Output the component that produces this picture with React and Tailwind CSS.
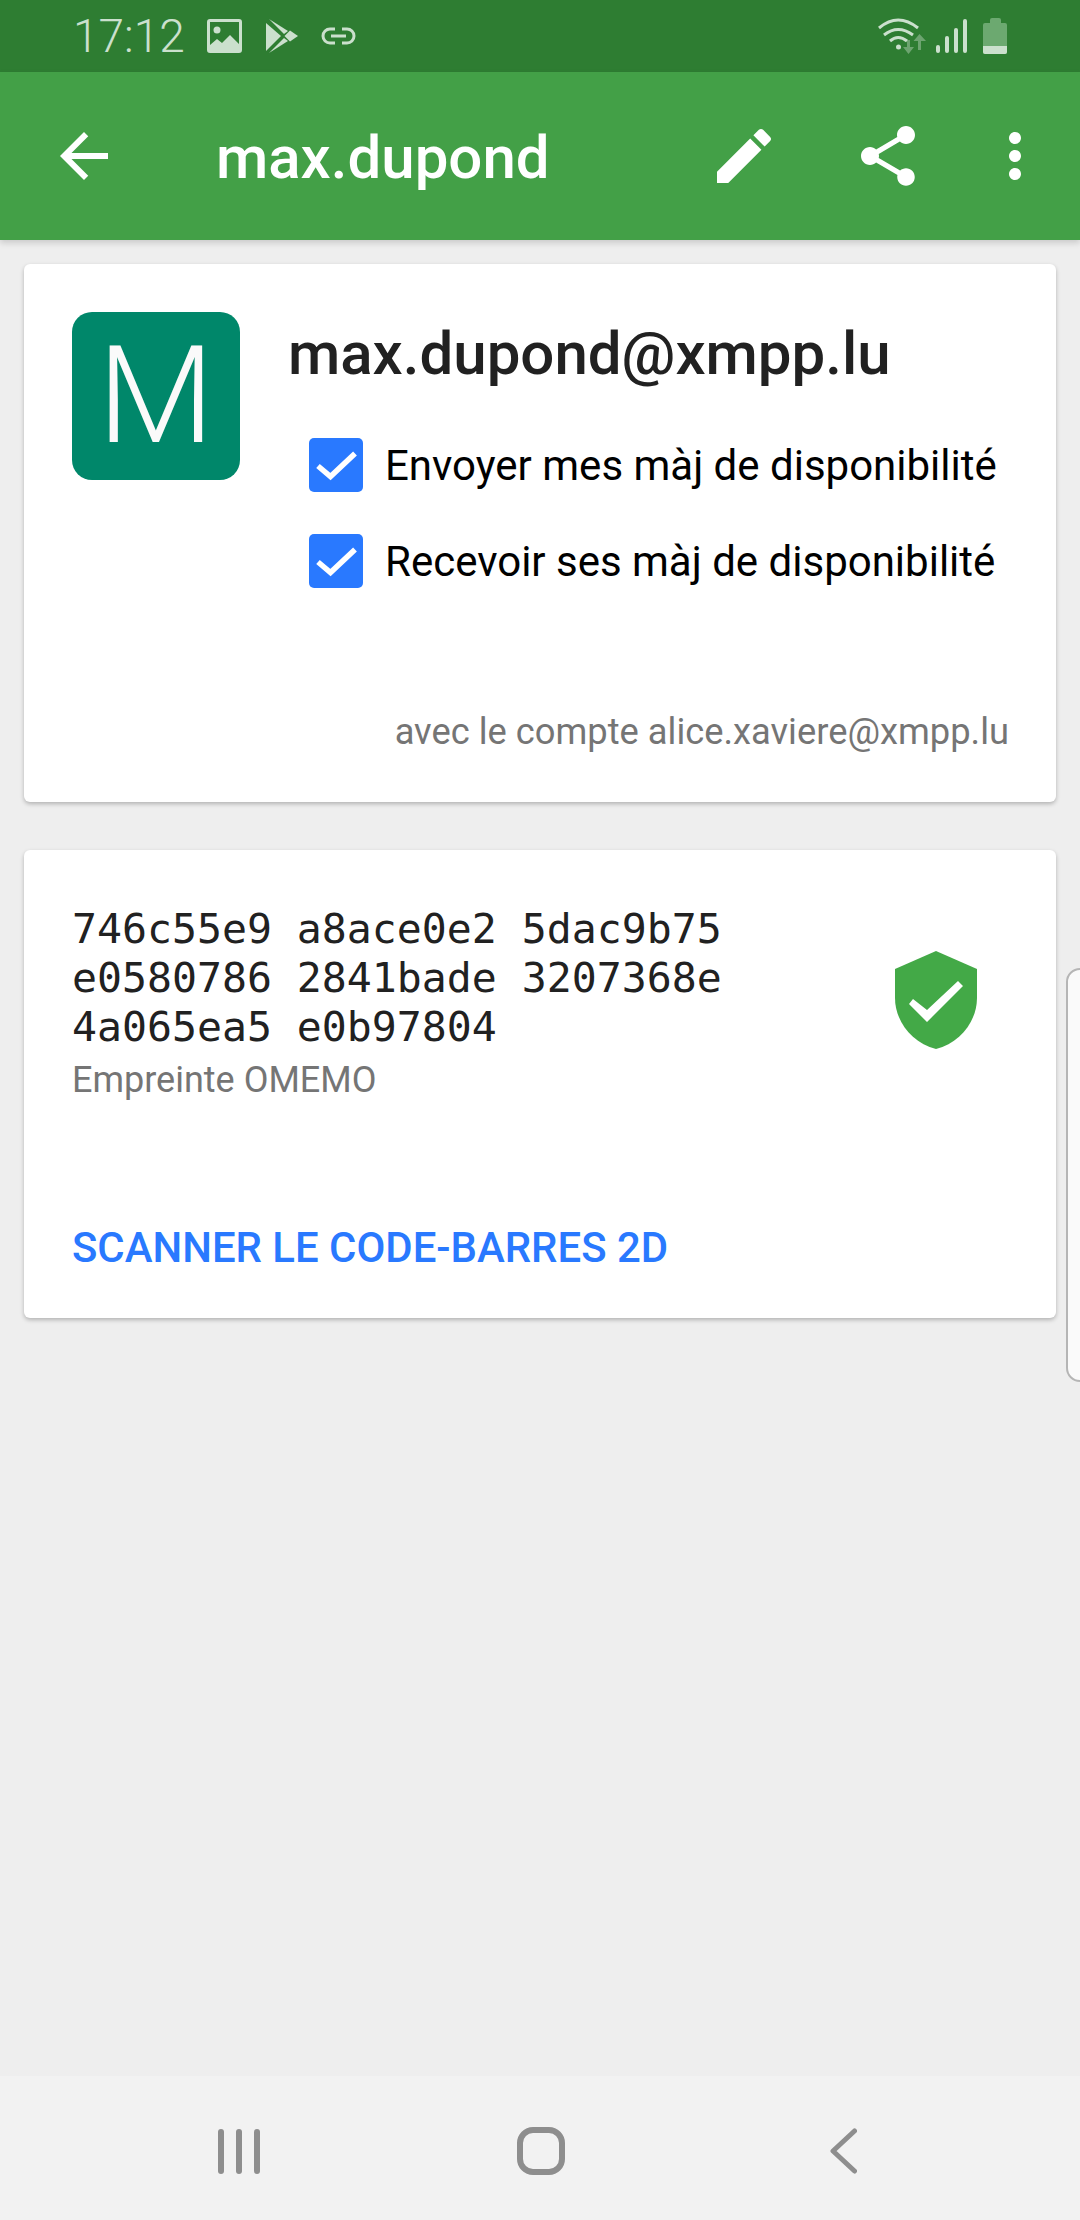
import React from "react";

const Icon = ({ d, className }) => (
  <svg viewBox="0 0 24 24" className={className} fill="currentColor">
    <path d={d} />
  </svg>
);

const CheckRow = ({ label }) => (
  <div className="flex items-center h-[96px] pl-[21px]">
    <div className="w-[54px] h-[54px] rounded-[5px] bg-[#2979ff] flex items-center justify-center">
      <svg viewBox="0 0 54 54" className="w-[54px] h-[54px]" fill="none" stroke="#fff" strokeWidth="5.5">
        <path d="M9 28 L21.500 38.500 L46 15.500" />
      </svg>
    </div>
    <span className="ml-[22px] pt-[2px] text-[42px] leading-[56px] text-black whitespace-nowrap">{label}</span>
  </div>
);

const StatusBar = () => (
  <div className="h-[72px] bg-[#2e7d32] flex items-center pl-[73px] pr-[73px] text-[#cbe0cd]">
    <span className="text-[46px] leading-[72px] font-light w-[134px]">17:12</span>
    {/* gallery */}
    <svg viewBox="0 0 35 34" className="w-[35px] h-[34px]">
      <path fill="currentColor" fillRule="evenodd" d="M3 0h29a3 3 0 0 1 3 3v28a3 3 0 0 1-3 3H3a3 3 0 0 1-3-3V3a3 3 0 0 1 3-3zM3 3v23l7-6 5 4 8-8 9 9V3z" />
      <circle cx="10" cy="11" r="3.500" fill="currentColor" />
    </svg>
    {/* play store */}
    <svg viewBox="0 0 32 34" className="w-[32px] h-[34px] ml-[24px]" fill="currentColor">
      <path d="M0 4 L15 17 L0 32 Z" />
      <path d="M3 0 L22 12 L18 15 Z" />
      <path d="M3 34 L22 22 L18 19 Z" />
      <path d="M24 11.500 L32 17 L24 22.500 L18.500 17 Z" />
    </svg>
    {/* link */}
    <svg viewBox="0 0 35 18" className="w-[35px] h-[18px] ml-[23px]" fill="none" stroke="currentColor" strokeWidth="3">
      <path d="M14 2H9a7 7 0 0 0 0 14h5" />
      <path d="M21 2h5a7 7 0 0 1 0 14h-5" />
      <path d="M10 9h15" />
    </svg>
    <div className="flex-1" />
    {/* wifi */}
    <svg viewBox="0 0 48 36" className="w-[48px] h-[36px]" fill="none" stroke="currentColor" strokeWidth="3">
      <path d="M1 10 Q20 -6 40 10" />
      <path d="M6 17 Q20 6 35 17" />
      <path d="M12 23 Q20 16 29 23" />
      <circle cx="20.500" cy="29" r="2.500" fill="currentColor" stroke="none" />
      <g opacity="0.4" fill="currentColor" stroke="none">
        <path d="M29 22h3v7h4l-5.500 7-5.500-7h4z" />
        <path d="M40 32h3v-9h5l-6.500-7-6 7h4.500z" />
      </g>
    </svg>
    {/* signal */}
    <div className="flex items-end gap-[5px] h-[34px] ml-[10px]">
      <div className="w-[4px] h-[8px] rounded-full bg-[#cbe0cd]" />
      <div className="w-[4px] h-[17px] rounded-full bg-[#cbe0cd]" />
      <div className="w-[4px] h-[25px] rounded-full bg-[#cbe0cd]" />
      <div className="w-[4px] h-[34px] rounded-full bg-[#cbe0cd]" />
    </div>
    {/* battery */}
    <div className="ml-[16px] w-[24px] h-[36px] flex flex-col items-center">
      <div className="w-[11px] h-[5px] rounded-t-[2px] bg-[#6ca970]" />
      <div className="w-[24px] h-[31px] rounded-[2px] bg-[#6ca970] flex flex-col justify-end overflow-hidden">
        <div className="h-[8px] bg-[#cbe0cd]" />
      </div>
    </div>
  </div>
);

const Toolbar = () => (
  <div className="relative z-10 h-[168px] bg-[#43a047] flex items-center text-white shadow-[0_3px_6px_rgba(0,0,0,0.15)]">
    <Icon className="w-[72px] h-[72px] ml-[48px]" d="M20 11H7.830l5.590-5.590L12 4l-8 8 8 8 1.410-1.410L7.830 13H20v-2z" />
    <h1 className="ml-[96px] pt-[3px] text-[60px] leading-[72px] font-medium">max.dupond</h1>
    <div className="flex-1" />
    <Icon className="w-[72px] h-[72px]" d="M3 17.25V21h3.75L17.81 9.94l-3.75-3.75L3 17.25zM20.71 7.04c.39-.39.39-1.02 0-1.41l-2.34-2.34c-.39-.39-1.02-.39-1.41 0l-1.83 1.83 3.75 3.75 1.83-1.83z" />
    <Icon className="w-[72px] h-[72px] ml-[72px]" d="M18 16.08c-.76 0-1.44.3-1.96.77L8.91 12.7c.05-.23.09-.46.09-.7s-.04-.47-.09-.7l7.05-4.11c.54.5 1.25.81 2.04.81 1.66 0 3-1.34 3-3s-1.34-3-3-3-3 1.34-3 3c0 .24.04.47.09.7L8.04 9.81C7.5 9.31 6.79 9 6 9c-1.66 0-3 1.34-3 3s1.34 3 3 3c.79 0 1.5-.31 2.04-.81l7.12 4.16c-.05.21-.08.43-.08.65 0 1.61 1.31 2.92 2.92 2.92 1.61 0 2.92-1.31 2.92-2.92s-1.31-2.92-2.92-2.92z" />
    <Icon className="w-[72px] h-[72px] ml-[55px] mr-[29px]" d="M12 8c1.1 0 2-.9 2-2s-.9-2-2-2-2 .9-2 2 .9 2 2 2zm0 2c-1.1 0-2 .9-2 2s.9 2 2 2 2-.9 2-2-.9-2-2-2zm0 6c-1.1 0-2 .9-2 2s.9 2 2 2 2-.9 2-2-.9-2-2-2z" />
  </div>
);

const ContactCard = () => (
  <section className="bg-white rounded-[6px] shadow-[0_2px_4px_rgba(0,0,0,0.25)] p-[48px] pb-[46px]">
    <div className="flex">
      <div className="w-[168px] h-[168px] rounded-[20px] bg-[#00876a] flex items-center justify-center text-[135px] leading-none font-light text-[#fafafa]">
        M
      </div>
      <div className="ml-[48px]">
        <h2 className="pt-[10px] text-[60px] leading-[64px] font-medium text-[#212121] whitespace-nowrap">max.dupond@xmpp.lu</h2>
        <div className="mt-[31px]">
          <CheckRow label="Envoyer mes màj de disponibilité" />
          <CheckRow label="Recevoir ses màj de disponibilité" />
        </div>
      </div>
    </div>
    <p className="mt-[99px] -mr-[1px] text-right text-[36.3px] leading-[48px] text-[#757575]">avec le compte alice.xaviere@xmpp.lu</p>
  </section>
);

const KeyCard = () => (
  <section className="mt-[48px] bg-white rounded-[6px] shadow-[0_2px_4px_rgba(0,0,0,0.25)] p-[48px] pb-[46px]">
    <div className="flex justify-between">
      <div>
        <div className="pt-[6px] font-['DejaVu_Sans_Mono',monospace] text-[41.5px] leading-[49px] text-[#212121] whitespace-pre">
          <div>746c55e9 a8ace0e2 5dac9b75</div>
          <div>e0580786 2841bade 3207368e</div>
          <div>4a065ea5 e0b97804</div>
        </div>
        <div className="mt-[5px] text-[36px] leading-[48px] text-[#757575]">Empreinte OMEMO</div>
      </div>
      <svg viewBox="0 0 82 98" className="w-[82px] h-[98px] mt-[53px] mr-[31px]">
        <path fill="#43a947" d="M41 0 L82 18 V47 C82 70 65 92 41 98 C17 92 0 70 0 47 V18 Z" />
        <path fill="#fff" d="M14 53 L18 48 L32 59 L63 30 L68 35 L32 71 Z" />
      </svg>
    </div>
    <div className="mt-[120px] text-[41.9px] leading-[48px] font-medium text-[#2979ff]">SCANNER LE CODE-BARRES 2D</div>
  </section>
);

const NavBar = () => (
  <div className="h-[144px] bg-[#f2f2f2] flex items-center pt-[6px] text-[#8e8e8e]">
    <div className="ml-[218px] flex gap-[12px]">
      <div className="w-[6px] h-[45px] rounded-full bg-[#8e8e8e]" />
      <div className="w-[6px] h-[45px] rounded-full bg-[#8e8e8e]" />
      <div className="w-[6px] h-[45px] rounded-full bg-[#8e8e8e]" />
    </div>
    <div className="ml-[257px] w-[48px] h-[48px] rounded-[16px] border-[6px] border-[#8e8e8e]" />
    <svg viewBox="0 0 27 46" className="ml-[265px] w-[27px] h-[46px]" fill="none" stroke="currentColor" strokeWidth="5" strokeLinecap="round" strokeLinejoin="round">
      <path d="M24.500 3 L3 23 L24.500 43" />
    </svg>
  </div>
);

export default function App() {
  return (
    <div className="relative w-[1080px] h-[2220px] flex flex-col overflow-hidden bg-[#eeeeee] font-['Roboto',sans-serif]">
      <StatusBar />
      <Toolbar />
      <main className="flex-1 p-[24px]">
        <ContactCard />
        <KeyCard />
      </main>
      <NavBar />
      {/* edge panel handle */}
      <div className="absolute left-[1066px] top-[968px] w-[30px] h-[414px] rounded-l-[14px] border-2 border-[#b5b5b5] bg-[#fafafa]" />
    </div>
  );
}
